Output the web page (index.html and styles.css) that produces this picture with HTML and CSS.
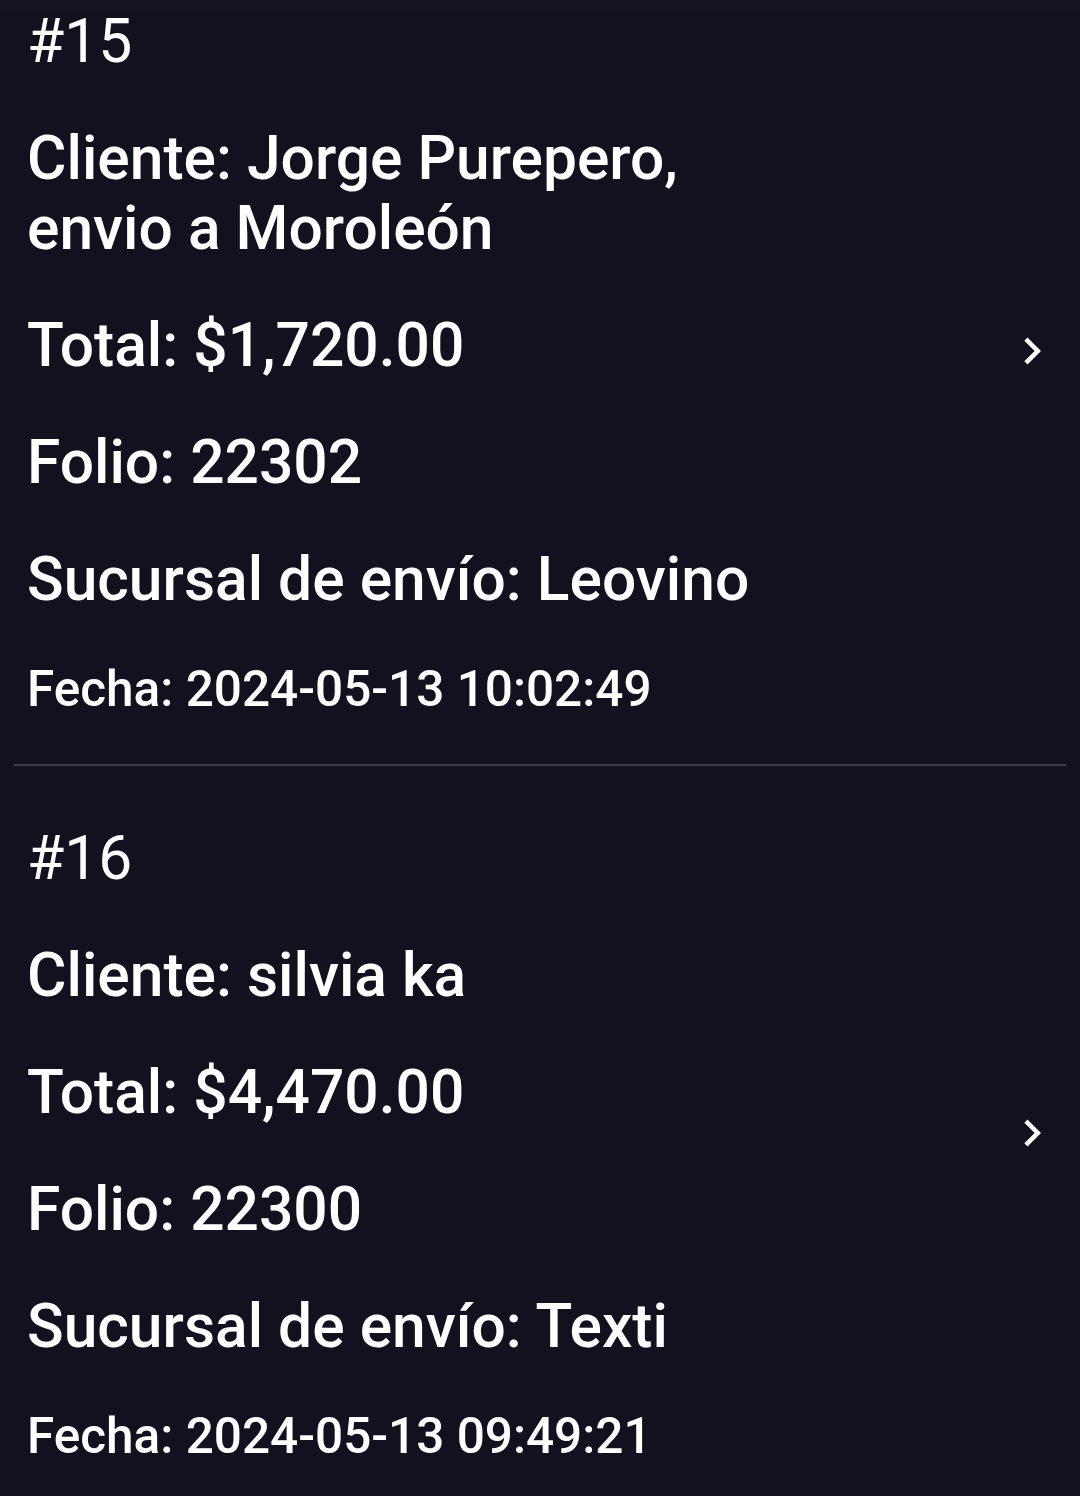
FILE: index.html
```html
<!DOCTYPE html>
<html lang="es">
<head>
    <meta charset="UTF-8">
    <meta name="viewport" content="width=device-width, initial-scale=1.0">
    <title>Pedidos</title>
    <link rel="stylesheet" href="styles.css">
</head>
<body>
    <div class="top-edge"></div>
    <main class="list">
        <div class="order">
            <div class="order-info">
                <p class="order-num">#15</p>
                <p class="line">Cliente: Jorge Purepero,<br>envio a Moroleón</p>
                <p class="line">Total: $1,720.00</p>
                <p class="line">Folio: 22302</p>
                <p class="line">Sucursal de envío: Leovino</p>
                <p class="date">Fecha: 2024-05-13 10:02:49</p>
            </div>
            <svg class="chevron" viewBox="0 0 24 24"><path d="M10 6L8.59 7.41 13.17 12l-4.58 4.59L10 18l6-6z"/></svg>
        </div>
        <hr class="divider">
        <div class="order">
            <div class="order-info">
                <p class="order-num">#16</p>
                <p class="line">Cliente: silvia ka</p>
                <p class="line">Total: $4,470.00</p>
                <p class="line">Folio: 22300</p>
                <p class="line">Sucursal de envío: Texti</p>
                <p class="date">Fecha: 2024-05-13 09:49:21</p>
            </div>
            <svg class="chevron" viewBox="0 0 24 24"><path d="M10 6L8.59 7.41 13.17 12l-4.58 4.59L10 18l6-6z"/></svg>
        </div>
    </main>
</body>
</html>
```

FILE: styles.css
```css
body {
    font-family: Roboto, "Noto Sans", sans-serif;
    background-color: #11111f;
    color: #ffffff;
    margin: 0;
    padding: 0;
    height: 1496px;
    overflow: hidden;
}
.top-edge {
    position: absolute;
    top: 0;
    left: 0;
    right: 0;
    height: 11px;
    background-color: #141422;
    border-bottom: 1px solid #0c0c17;
    z-index: 1;
}
.list {
    margin-top: -51px;
}
.order {
    display: flex;
    align-items: center;
    padding: 58px 21px 48px 27px;
}
.order-info {
    flex: 1;
    display: flex;
    flex-direction: column;
    gap: 47px;
}
.order-info p {
    margin: 0;
}
.order-num {
    font-size: 60.5px;
    line-height: 70px;
    font-weight: 400;
}
.line {
    font-size: 60.5px;
    line-height: 70px;
    font-weight: 500;
}
.date {
    font-size: 49.5px;
    line-height: 54px;
    font-weight: 500;
}
.chevron {
    width: 54px;
    height: 54px;
    fill: #ffffff;
    margin-bottom: 22px;
}
.divider {
    border: none;
    height: 2px;
    background-color: #3b3b4a;
    margin: 0 14px;
}
```
